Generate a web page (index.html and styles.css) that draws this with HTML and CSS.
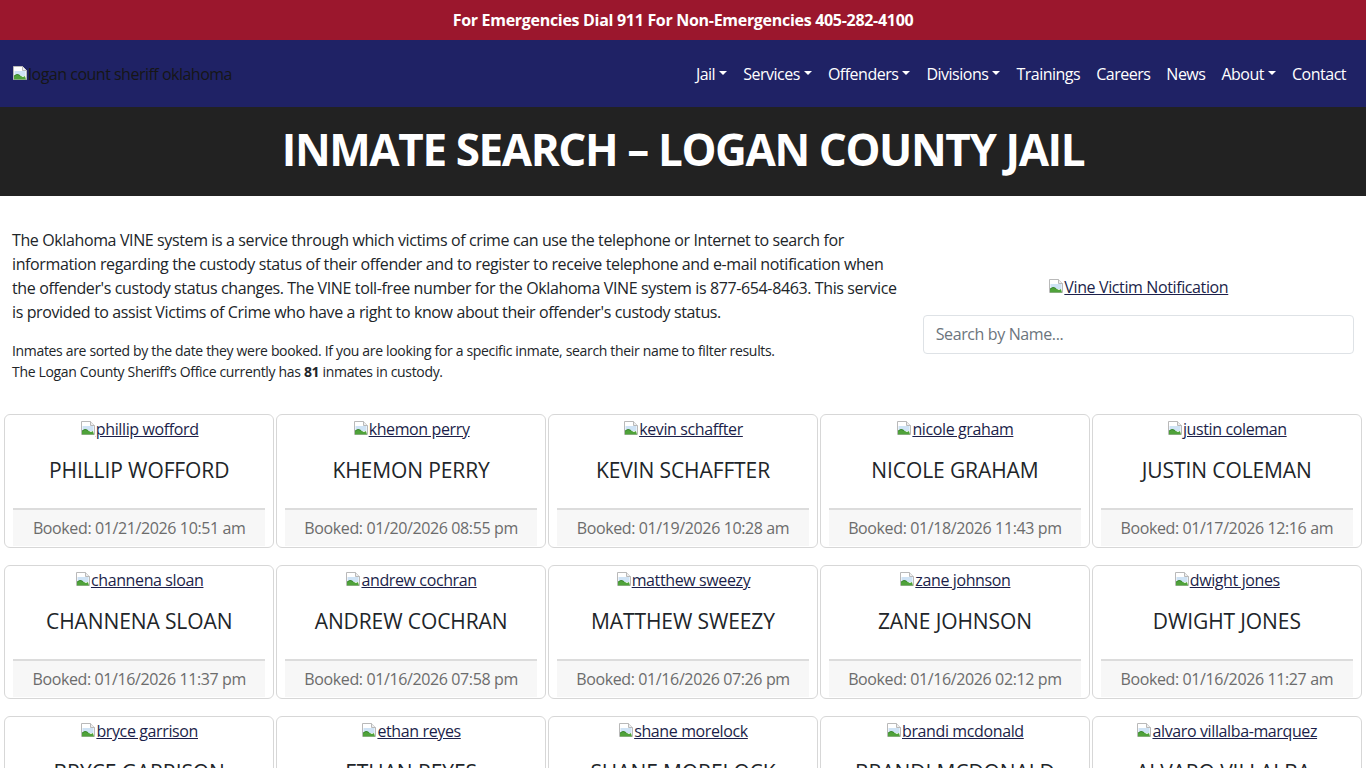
FILE: index.html
```html
<!DOCTYPE html>
<html lang="en">
<head>
<meta charset="utf-8">
<title>Inmate Search – Logan County Jail</title>
<link rel="stylesheet" href="styles.css">
</head>
<body>
<svg class="defs" width="0" height="0" aria-hidden="true">
  <symbol id="broken" viewBox="0 0 16 16">
    <path d="M1.5 1.5h9l4 4v9h-13z" fill="#fff" stroke="#b9b9b9"/>
    <path d="M10.5 1.5v4h4" fill="#eee" stroke="#b9b9b9"/>
    <rect x="2.5" y="6" width="11" height="5" fill="#cfe3f5"/>
    <path d="M2 14.5 L2 11 Q5 8 8 10.5 L11 12 L13 11 L14 14.5 Z" fill="#4fa23a"/>
    <path d="M2 11 Q5 8 8 10.5" fill="none" stroke="#2f7d23" stroke-width=".8"/>
  </symbol>
</svg>

<div class="topbar">For Emergencies Dial 911 For Non-Emergencies 405-282-4100</div>

<nav class="navbar">
  <a class="brand" href="#"><svg class="broken-icon"><use href="#broken"/></svg>logan count sheriff oklahoma</a>
  <ul class="nav">
    <li><a class="dropdown" href="#">Jail</a></li>
    <li><a class="dropdown" href="#">Services</a></li>
    <li><a class="dropdown" href="#">Offenders</a></li>
    <li><a class="dropdown" href="#">Divisions</a></li>
    <li><a href="#">Trainings</a></li>
    <li><a href="#">Careers</a></li>
    <li><a href="#">News</a></li>
    <li><a class="dropdown" href="#">About</a></li>
    <li><a href="#">Contact</a></li>
  </ul>
</nav>

<header class="hero">
  <h1>INMATE SEARCH – LOGAN COUNTY JAIL</h1>
</header>

<main>
  <section class="intro">
    <div class="intro-text">
      <p class="lead">The Oklahoma VINE system is a service through which victims of crime can use the telephone or Internet to search for information regarding the custody status of their offender and to register to receive telephone and e-mail notification when the offender's custody status changes. The VINE toll-free number for the Oklahoma VINE system is 877-654-8463. This service is provided to assist Victims of Crime who have a right to know about their offender's custody status.</p>
      <p class="note">Inmates are sorted by the date they were booked. If you are looking for a specific inmate, search their name to filter results.<br>The Logan County Sheriff’s Office currently has <strong>81</strong> inmates in custody.</p>
    </div>
    <div class="intro-side">
      <a class="vine" href="#"><svg class="broken-icon"><use href="#broken"/></svg>Vine Victim Notification</a>
      <input class="search" type="text" placeholder="Search by Name...">
    </div>
  </section>

  <section class="cards">
    <article class="card"><a class="photo" href="#"><svg class="broken-icon"><use href="#broken"/></svg>phillip wofford</a><h4 class="name">phillip wofford</h4><div class="booked">Booked: 01/21/2026 10:51 am</div></article>
    <article class="card"><a class="photo" href="#"><svg class="broken-icon"><use href="#broken"/></svg>khemon perry</a><h4 class="name">khemon perry</h4><div class="booked">Booked: 01/20/2026 08:55 pm</div></article>
    <article class="card"><a class="photo" href="#"><svg class="broken-icon"><use href="#broken"/></svg>kevin schaffter</a><h4 class="name">kevin schaffter</h4><div class="booked">Booked: 01/19/2026 10:28 am</div></article>
    <article class="card"><a class="photo" href="#"><svg class="broken-icon"><use href="#broken"/></svg>nicole graham</a><h4 class="name">nicole graham</h4><div class="booked">Booked: 01/18/2026 11:43 pm</div></article>
    <article class="card"><a class="photo" href="#"><svg class="broken-icon"><use href="#broken"/></svg>justin coleman</a><h4 class="name">justin coleman</h4><div class="booked">Booked: 01/17/2026 12:16 am</div></article>

    <article class="card"><a class="photo" href="#"><svg class="broken-icon"><use href="#broken"/></svg>channena sloan</a><h4 class="name">channena sloan</h4><div class="booked">Booked: 01/16/2026 11:37 pm</div></article>
    <article class="card"><a class="photo" href="#"><svg class="broken-icon"><use href="#broken"/></svg>andrew cochran</a><h4 class="name">andrew cochran</h4><div class="booked">Booked: 01/16/2026 07:58 pm</div></article>
    <article class="card"><a class="photo" href="#"><svg class="broken-icon"><use href="#broken"/></svg>matthew sweezy</a><h4 class="name">matthew sweezy</h4><div class="booked">Booked: 01/16/2026 07:26 pm</div></article>
    <article class="card"><a class="photo" href="#"><svg class="broken-icon"><use href="#broken"/></svg>zane johnson</a><h4 class="name">zane johnson</h4><div class="booked">Booked: 01/16/2026 02:12 pm</div></article>
    <article class="card"><a class="photo" href="#"><svg class="broken-icon"><use href="#broken"/></svg>dwight jones</a><h4 class="name">dwight jones</h4><div class="booked">Booked: 01/16/2026 11:27 am</div></article>

    <article class="card"><a class="photo" href="#"><svg class="broken-icon"><use href="#broken"/></svg>bryce garrison</a><h4 class="name">bryce garrison</h4><div class="booked">Booked: 01/15/2026 09:14 pm</div></article>
    <article class="card"><a class="photo" href="#"><svg class="broken-icon"><use href="#broken"/></svg>ethan reyes</a><h4 class="name">ethan reyes</h4><div class="booked">Booked: 01/15/2026 04:02 pm</div></article>
    <article class="card"><a class="photo" href="#"><svg class="broken-icon"><use href="#broken"/></svg>shane morelock</a><h4 class="name">shane morelock</h4><div class="booked">Booked: 01/15/2026 01:47 pm</div></article>
    <article class="card"><a class="photo" href="#"><svg class="broken-icon"><use href="#broken"/></svg>brandi mcdonald</a><h4 class="name">brandi mcdonald</h4><div class="booked">Booked: 01/14/2026 10:33 pm</div></article>
    <article class="card"><a class="photo" href="#"><svg class="broken-icon"><use href="#broken"/></svg>alvaro villalba-marquez</a><h4 class="name">alvaro villalba-marquez</h4><div class="booked">Booked: 01/14/2026 06:21 am</div></article>
  </section>
</main>
</body>
</html>
```

FILE: styles.css
```css
* { box-sizing: border-box; }

body {
  margin: 0;
  font-family: "Open Sans", "Noto Sans", sans-serif;
  font-size: 16px;
  line-height: 1.5;
  letter-spacing: -0.38px;
  color: #212529;
  background: #fff;
}

.defs { position: absolute; width: 0; height: 0; overflow: hidden; }

.broken-icon {
  width: 16px;
  height: 16px;
  vertical-align: -1px;
}

/* Top emergency bar */
.topbar {
  background: #9b172d;
  color: #fff;
  font-weight: 700;
  text-align: center;
  height: 40px;
  line-height: 40px;
  letter-spacing: -0.3px;
}

/* Navbar */
.navbar {
  background: #1f2265;
  height: 67px;
  display: flex;
  align-items: center;
  justify-content: space-between;
  padding: 0 12px;
}

.brand {
  color: #161616;
  text-decoration: none;
  font-size: 16px;
  letter-spacing: -0.5px;
}

.nav {
  display: flex;
  list-style: none;
  margin: 0;
  padding: 0;
}

.nav a {
  display: block;
  padding: 8px;
  color: #fff;
  text-decoration: none;
  letter-spacing: -0.5px;
}

.dropdown::after {
  content: "";
  display: inline-block;
  margin-left: .255em;
  vertical-align: .255em;
  border-top: .3em solid;
  border-right: .3em solid transparent;
  border-left: .3em solid transparent;
}

/* Hero */
.hero {
  background: #222;
  height: 89px;
  display: flex;
  align-items: center;
  justify-content: center;
  padding-bottom: 5px;
}

.hero h1 {
  margin: 0;
  color: #fff;
  font-size: 44px;
  font-weight: 700;
  line-height: 1.2;
  letter-spacing: -1.4px;
}

/* Intro */
.intro {
  display: flex;
  align-items: center;
  margin-top: 32px;
}

.intro-text {
  width: 66.6667%;
  padding: 0 12px;
}

.intro-side {
  width: 33.3333%;
  padding: 2px 12px 0;
  display: flex;
  flex-direction: column;
  align-items: stretch;
}

.lead { margin: 0 0 16px; }

.note {
  margin: 0 0 16px;
  font-size: 14px;
  letter-spacing: -0.33px;
}

.vine {
  align-self: center;
  color: #1c1f4a;
}

.search {
  margin-top: 16px;
  height: 39px;
  padding: 6px 12px;
  font: inherit;
  letter-spacing: inherit;
  color: #212529;
  border: 1px solid #dee2e6;
  border-radius: 4px;
  background: #fff;
}

.search::placeholder { color: #6c757d; }

/* Cards */
.cards {
  display: grid;
  grid-template-columns: repeat(5, 1fr);
  column-gap: 1.5px;
  row-gap: 17px;
  padding: 0 4px;
  margin-top: 16px;
}

.card {
  border: 1px solid #d7d7d7;
  border-radius: 6px;
  padding: 2px 8px 1px;
  text-align: center;
  display: flex;
  flex-direction: column;
}

.photo {
  color: #1c1f4a;
  align-self: center;
}

.name {
  margin: 17px 0 25px;
  font-size: 21px;
  font-weight: 500;
  line-height: 1.2;
  letter-spacing: -0.1px;
  text-transform: uppercase;
  color: #212529;
}

.booked {
  margin-top: auto;
  border-top: 2px solid #dcdcdc;
  background: #f7f7f7;
  color: #6c6c6c;
  padding: 6px 8px;
}
```
